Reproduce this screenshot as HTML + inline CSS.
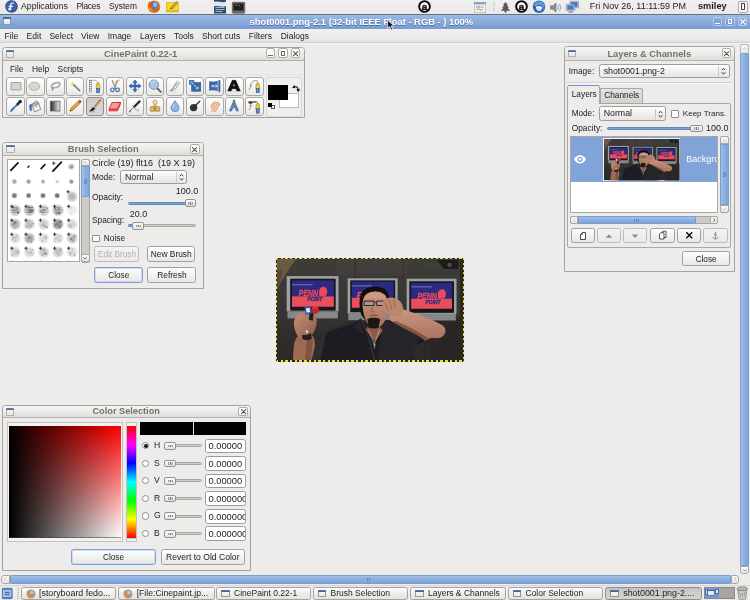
<!DOCTYPE html>
<html>
<head>
<meta charset="utf-8">
<title>CinePaint</title>
<style>
html,body{margin:0;padding:0;}
body{width:750px;height:600px;overflow:hidden;background:#edeceb;font-family:"Liberation Sans",sans-serif;font-size:8.6px;color:#1c1c1c;position:relative;}
.a{position:absolute;box-sizing:border-box;}
.t{position:absolute;white-space:nowrap;line-height:10px;height:10px;}
.b{font-weight:bold;}
svg{position:absolute;overflow:visible;}
/* windows */
.win{position:absolute;background:#edeceb;border:1px solid #a5a3a0;border-radius:3.5px 3.5px 0 0;box-sizing:border-box;}
.wt{position:absolute;left:0;top:0;right:0;height:13px;background:linear-gradient(#f6f5f4,#eceae8 55%,#dedcd9);border-bottom:1px solid #b3b1ae;border-radius:3px 3px 0 0;box-sizing:border-box;}
.wtt{position:absolute;left:0;right:0;top:1px;text-align:center;font-weight:bold;color:#73716e;font-size:9.3px;line-height:10px;}
.wico{position:absolute;left:3px;top:2.4px;width:8.3px;height:7.3px;background:linear-gradient(to bottom,#3a69ad 0,#3a69ad 2px,#f3f2ee 2px,#e6e5e1 100%);box-shadow:inset 0 0 0 .8px rgba(140,143,150,.8);box-sizing:border-box;border-radius:1px;}
.wbtn{position:absolute;top:1.5px;width:9.8px;height:9.7px;border:1px solid #adaba8;border-radius:2px;background:#fbfbfa;box-sizing:border-box;}
.btn{position:absolute;box-sizing:border-box;border:1px solid #a3a19e;border-radius:2.5px;background:linear-gradient(#fefefe,#f3f2f1 50%,#e8e7e5);text-align:center;line-height:13px;font-size:8.4px;white-space:nowrap;}
.btn.dis{color:#b4b2af;border-color:#bebcb9;background:linear-gradient(#f4f3f2,#eae9e7);}
.btn.foc{border-color:#7d9fd2;box-shadow:inset 0 0 0 0.7px #c3d4ec;}
.ent{position:absolute;box-sizing:border-box;border:1px solid #9f9d9a;border-radius:2.5px;background:#fff;}
.combo{position:absolute;box-sizing:border-box;border:1px solid #9f9d9a;border-radius:2.5px;background:linear-gradient(#fefefe,#f1f0ef 50%,#e6e5e3);}
.trough{position:absolute;box-sizing:border-box;height:3px;border:0.5px solid #a8a6a3;border-radius:1.5px;background:#cfcdca;}
.fill{position:absolute;box-sizing:border-box;height:3px;border-radius:1.5px;background:#7ea2d6;border:0.5px solid #6288c0;}
.knob{position:absolute;box-sizing:border-box;height:7.6px;margin-top:-.55px;border:1px solid #94928f;border-radius:2px;background:linear-gradient(#fdfdfd,#e2e1df);}
.knob:after{content:"";position:absolute;left:50%;top:1.6px;margin-left:-.4px;width:.8px;height:2.6px;background:#858380;box-shadow:-1.7px 0 0 #858380,1.7px 0 0 #858380;}
.chk{position:absolute;box-sizing:border-box;width:7.5px;height:7.5px;border:1px solid #8e8c89;background:#fff;border-radius:1px;}
.radio{position:absolute;box-sizing:border-box;width:7.4px;height:7.4px;border:1px solid #8e8c89;background:#fff;border-radius:50%;}
.sbar{position:absolute;box-sizing:border-box;background:#d6d4d1;}
.sbtn{position:absolute;box-sizing:border-box;border:1px solid #a9a7a4;border-radius:2px;background:linear-gradient(#fbfbfa,#e7e6e4);}
.sth{position:absolute;box-sizing:border-box;border:1px solid #7a9cd0;background:linear-gradient(to right,#a5c1e9,#8cb0df 45%,#7fa4d9);border-radius:1px;}
.sthh{position:absolute;box-sizing:border-box;border:1px solid #7a9cd0;background:linear-gradient(#a5c1e9,#8cb0df 45%,#7fa4d9);border-radius:1px;}
.tb{position:absolute;box-sizing:border-box;width:18.400px;height:18.600px;border:1px solid #aaa8a5;border-radius:3px;background:linear-gradient(#ffffff,#f4f3f2 55%,#e9e8e6);}
.tb.on{background:linear-gradient(#cfcdca,#dad8d6);border-color:#8f8d8a;}
.tb svg{left:0.200px;top:0.300px;width:16px;height:16px;}
.task{position:absolute;box-sizing:border-box;top:586.5px;height:13px;border:1px solid #a5a3a0;border-radius:2.5px;background:linear-gradient(#fdfdfc,#eeedec 50%,#e4e3e1);}
.task .t{top:0.8px;font-size:8.5px;}
.tico{position:absolute;left:4.3px;top:2.2px;width:8.6px;height:7.6px;background:linear-gradient(to bottom,#3a69ad 0,#3a69ad 2px,#f6f5f2 2px,#eae9e5 100%);box-shadow:inset 0 0 0 .8px rgba(110,114,124,.9);box-sizing:border-box;border-radius:1px;}
</style>
</head>
<body>
<div id="root" style="position:absolute;left:0;top:0;width:750px;height:600px;will-change:transform;overflow:hidden;">
<!-- ================= TOP PANEL ================= -->
<div class="a" style="left:0;top:0;width:750px;height:14px;background:linear-gradient(#f1f0ef,#eae9e7);"></div>
<div class="a" style="left:0;top:13.7px;width:750px;height:1.1px;background:#66707f;"></div>
<!-- fedora logo -->
<svg style="left:4.5px;top:0.3px;width:13px;height:13px" viewBox="0 0 26 26"><circle cx="13" cy="13" r="12.5" fill="#2f4f8f"/><circle cx="12" cy="12" r="11" fill="#3c63a8"/><path d="M16.5 6.2c-3.2-.9-5.2 1-5.2 3.7v8.3c0 2.3-3.4 2.6-3.6.2-.1-1.700 1.600-2.300 3.000-1.900M8.300 12.800h6.600" fill="none" stroke="#fff" stroke-width="2.3" stroke-linecap="round"/></svg>
<div class="t" style="left:21px;top:1.2px;font-size:8.7px;">Applications</div>
<div class="t" style="left:76.4px;top:1.2px;font-size:8.4px;letter-spacing:-0.22px;">Places</div>
<div class="t" style="left:109px;top:1.2px;font-size:8.4px;">System</div>
<!-- firefox -->
<svg style="left:147px;top:0;width:14px;height:13.5px" viewBox="0 0 28 27"><circle cx="14" cy="13.500" r="12.500" fill="#e8761c"/><circle cx="14.500" cy="11.500" r="8" fill="#3f7fd0"/><circle cx="16" cy="9.500" r="4.500" fill="#8cc4f0"/><path d="M2 12c1.500 9 9 13.500 16 12 5-1.200 8.500-6 8-11.500-1 5-5 8-9.500 7.500-4-.5-6-3.500-6-6.500 0-2 2-3 4.500-2.500-1.500-2-4.500-2.500-6.500-1.500C7 6 6 4 6.500 2.500 3.500 5 1.700 8.500 2 12z" fill="#e25a10"/><path d="M3 14c2 7 8 10 14 9-5 0-9-3-10-7z" fill="#f5b23a"/></svg>
<!-- sticky note -->
<svg style="left:166px;top:1px;width:13px;height:12px" viewBox="0 0 26 24"><rect x="0.500" y="3" width="24" height="19" fill="#f2d62e" stroke="#c9a50e" stroke-width="1"/><rect x="0.500" y="18" width="24" height="4" fill="#e0bd10"/><path d="M9 16l2-4.500L21 .5l3 2.500L14 14.500z" fill="#d89a3a" stroke="#7a5a20" stroke-width=".8"/><path d="M9 16l1.300-3 1.700 1.800z" fill="#333"/></svg>
<!-- writer doc -->
<svg style="left:213px;top:0;width:14px;height:13.5px" viewBox="0 0 28 27"><path d="M2 0h24v27H2z" fill="#2d4a6e"/><path d="M2 4c8-3 16 3 24-1v9c-8 4-16-2-24 1z" fill="#dfe6ee"/><path d="M5 15h18M5 19h18M5 23h14" stroke="#9fb6d0" stroke-width="2"/></svg>
<!-- terminal -->
<svg style="left:232px;top:1.5px;width:13px;height:11.5px" viewBox="0 0 26 23"><rect x=".5" y=".5" width="25" height="22" rx="2" fill="#6b6d6a" stroke="#3c3d3b"/><rect x="3" y="3" width="20" height="14" fill="#1d1f1e"/><path d="M6 6h5M14 6l2 3" stroke="#9a9c99" stroke-width="1.500"/></svg>
<!-- circled a #1 -->
<svg style="left:418px;top:0.200px;width:13px;height:13px" viewBox="0 0 26 26"><circle cx="13" cy="13" r="10.700" fill="#fff" stroke="#0a0a0a" stroke-width="3.900"/><text x="13" y="19.200" font-family="Liberation Sans" font-weight="bold" font-size="19.500" text-anchor="middle" fill="#0a0a0a" stroke="#0a0a0a" stroke-width=".9">a</text></svg>
<!-- calendar-ish -->
<svg style="left:473.500px;top:1.500px;width:12px;height:10.500px" viewBox="0 0 24 21"><rect x=".5" y=".5" width="23" height="20" fill="#f3f2ee" stroke="#9a9894"/><rect x=".5" y=".5" width="23" height="4" fill="#7a9cc9"/><path d="M5 8h6v4H5zM13 8h6M13 11h6M5 15h14M9 13l5 5" stroke="#a9a7a2" stroke-width="1.500" fill="#d8d6d0"/></svg>
<!-- handle -->
<div class="a" style="left:492.500px;top:2px;width:2px;height:10px;background:repeating-linear-gradient(#c9c7c4 0 1px,transparent 1px 2px);"></div>
<!-- tree -->
<svg style="left:500px;top:1.500px;width:11px;height:10.500px" viewBox="0 0 22 21"><path d="M11 0l5 6h-2.500l4.500 5.500h-3l5.500 6H13v3.500H9V17.500H1.500l5.500-6H4l4.500-5.500H6z" fill="#585957"/></svg>
<!-- circled a #2 -->
<svg style="left:515.200px;top:0.200px;width:13px;height:13px" viewBox="0 0 26 26"><circle cx="13" cy="13" r="10.700" fill="#fff" stroke="#0a0a0a" stroke-width="3.900"/><text x="13" y="19.200" font-family="Liberation Sans" font-weight="bold" font-size="19.500" text-anchor="middle" fill="#0a0a0a" stroke="#0a0a0a" stroke-width=".9">a</text></svg>
<!-- thunderbird -->
<svg style="left:532px;top:0;width:14px;height:13.500px" viewBox="0 0 28 27"><circle cx="14" cy="13.500" r="12.500" fill="#2d62b4"/><path d="M5 7c5-6 15-6 19 1 2 4 1 9-2 12 1-5-1-9-5-10-4-1-7 1-8 4-2-2-4-4-4-7z" fill="#5b9be6"/><path d="M8 14c3-3 9-3 12 0 1 3-1 7-5 8-4 0-7-3-7-8z" fill="#f4f5f8"/><path d="M9 17l10 0-5 4z" fill="#c9d3e4"/><path d="M4 9l5 2-3 2z" fill="#e9a520"/></svg>
<!-- speaker -->
<svg style="left:550px;top:1.500px;width:12px;height:11px" viewBox="0 0 24 22"><path d="M1 7.500h5L12 2v18l-6-5.500H1z" fill="#8f908d" stroke="#5e5f5c" stroke-width="1"/><path d="M15 6.500c2 2.500 2 6.500 0 9M18.500 4c3.500 4 3.500 10 0 14" fill="none" stroke="#5f8fd0" stroke-width="1.600"/></svg>
<!-- network -->
<svg style="left:566px;top:1px;width:13px;height:12px" viewBox="0 0 26 24"><rect x="8" y=".5" width="17" height="13" rx="1" fill="#c9d4e4" stroke="#5e6f8a"/><rect x="10" y="2.500" width="13" height="9" fill="#3f6fb4"/><rect x=".5" y="6.500" width="17" height="13" rx="1" fill="#d6dde8" stroke="#5e6f8a"/><rect x="2.500" y="8.500" width="13" height="9" fill="#4a7cc4"/><path d="M5 22.500h9M9 20v2.500" stroke="#6b6d6a" stroke-width="1.500"/></svg>
<div class="t" style="left:589.800px;top:1.200px;font-size:9px;">Fri Nov 26, 11:11:59 PM</div>
<div class="t b" style="left:698px;top:1.200px;font-size:9.200px;">smiley</div>
<!-- right box icon -->
<div class="a" style="left:737.500px;top:1px;width:10.500px;height:11.500px;border:1px solid #a9a7a4;border-radius:2px;background:#f8f8f7;"></div>
<div class="a" style="left:741.300px;top:3.200px;width:3.400px;height:7px;border:1px solid #3a3a3a;border-radius:0.800px;background:#fff;"></div>

<!-- ================= MAIN TITLE BAR ================= -->
<div class="a" style="left:0;top:14.700px;width:750px;height:14.100px;background:linear-gradient(#a0bde6,#98b7e3 8%,#87a9db 50%,#779cd3);"></div>
<div class="a" style="left:3px;top:17.300px;width:8.300px;height:7.300px;background:linear-gradient(to bottom,#3a69ad 0,#3a69ad 2px,#f3f2ee 2px,#e6e5e1 100%);box-shadow:inset 0 0 0 .8px rgba(90,104,134,.85);border-radius:1px;"></div>
<div class="t b" style="left:249.500px;top:16.500px;font-size:9.400px;color:#fff;text-shadow:0 0.600px 0.500px rgba(40,60,110,.55);">shot0001.png-2.1 (32-bit IEEE Float - RGB - ) 100%</div>
<!-- main window buttons -->
<div class="a" style="left:712.800px;top:16.500px;width:9.700px;height:9.700px;border:1px solid #b9cdea;border-radius:2px;background:linear-gradient(#8fb0e0,#6f96d0);"></div>
<div class="a" style="left:715.300px;top:22.600px;width:4.700px;height:1.400px;background:#fff;"></div>
<div class="a" style="left:725.200px;top:16.500px;width:9.700px;height:9.700px;border:1px solid #b9cdea;border-radius:2px;background:linear-gradient(#8fb0e0,#6f96d0);"></div>
<div class="a" style="left:727.900px;top:19.200px;width:4.400px;height:4.400px;border:1px solid #fff;border-top-width:1.600px;"></div>
<div class="a" style="left:737.600px;top:16.500px;width:9.700px;height:9.700px;border:1px solid #b9cdea;border-radius:2px;background:linear-gradient(#8fb0e0,#6f96d0);"></div>
<svg style="left:739.600px;top:18.500px;width:5.700px;height:5.700px" viewBox="0 0 10 10"><path d="M1 1l8 8M9 1l-8 8" stroke="#fff" stroke-width="2.200" stroke-linecap="round"/></svg>

<!-- ================= MAIN MENU BAR ================= -->
<div class="a" style="left:0;top:28.800px;width:750px;height:13.700px;background:linear-gradient(#f0efee,#ecebea 70%,#e2e1df);"></div>
<div class="a" style="left:0;top:42.300px;width:750px;height:.8px;background:#d3d1ce;"></div><div class="a" style="left:0;top:43.100px;width:750px;height:1px;background:#f5f4f3;"></div>
<div class="t" style="left:4.600px;top:30.800px;font-size:8.5px;">File</div>
<div class="t" style="left:26.600px;top:30.800px;font-size:8.5px;">Edit</div>
<div class="t" style="left:49.400px;top:30.800px;font-size:8.5px;">Select</div>
<div class="t" style="left:81px;top:30.800px;font-size:8.5px;">View</div>
<div class="t" style="left:107.700px;top:30.800px;font-size:8.5px;">Image</div>
<div class="t" style="left:140px;top:30.800px;font-size:8.5px;">Layers</div>
<div class="t" style="left:174px;top:30.800px;font-size:8.5px;">Tools</div>
<div class="t" style="left:201.900px;top:30.800px;font-size:8.5px;">Short cuts</div>
<div class="t" style="left:248.800px;top:30.800px;font-size:8.5px;">Filters</div>
<div class="t" style="left:280.700px;top:30.800px;font-size:8.5px;">Dialogs</div>

<!-- ================= MAIN SCROLLBARS ================= -->
<div class="sbar" style="left:739.500px;top:44px;width:10.500px;height:530px;background:#edeceb;"></div>
<div class="sbtn" style="left:740.300px;top:44.200px;width:8.700px;height:9px;border-radius:3px 3px 0 0;border-color:#b9b7b4;border-bottom:none;"></div>
<svg style="left:742.600px;top:47.300px;width:4px;height:2.500px" viewBox="0 0 8 5"><path d="M.5 4.500L4 .8l3.500 3.700" fill="none" stroke="#b3b1ae" stroke-width="1.400"/></svg>
<div class="sth" style="left:740.300px;top:53px;width:8.700px;height:513px;"></div>
<div class="sbtn" style="left:740.300px;top:566px;width:8.700px;height:8px;border-radius:0 0 3px 3px;"></div>
<svg style="left:742.600px;top:568.800px;width:4px;height:2.500px" viewBox="0 0 8 5"><path d="M.5.500L4 4.200 7.500.5" fill="none" stroke="#77756f" stroke-width="1.400"/></svg>
<div class="sbtn" style="left:1.300px;top:575px;width:8.300px;height:8.600px;border-radius:3px 0 0 3px;"></div>
<svg style="left:4.200px;top:577.300px;width:2.500px;height:4px" viewBox="0 0 5 8"><path d="M4.500.5L.8 4l3.700 3.500" fill="none" stroke="#b3b1ae" stroke-width="1.400"/></svg>
<div class="sthh" style="left:9.600px;top:575px;width:721px;height:8.600px;"></div>
<div class="a" style="left:366.500px;top:577.800px;width:4.600px;height:3px;background:repeating-linear-gradient(to right,#5f86c0 0 .8px,transparent .8px 1.900px);"></div>
<div class="sbtn" style="left:730.600px;top:575px;width:8.300px;height:8.600px;border-radius:0 3px 3px 0;"></div>
<svg style="left:733.600px;top:577.300px;width:2.500px;height:4px" viewBox="0 0 5 8"><path d="M.5.500L4.200 4 .5 7.500" fill="none" stroke="#b3b1ae" stroke-width="1.400"/></svg>

<!-- ================= TASKBAR ================= -->
<div class="a" style="left:0;top:584.500px;width:750px;height:15.500px;background:linear-gradient(#e9e8e6,#efeeed 30%,#ebeae8);border-top:1px solid #d9d7d4;"></div>
<!-- show desktop -->
<svg style="left:2px;top:587.500px;width:10.500px;height:11px" viewBox="0 0 21 22"><rect x=".5" y=".5" width="20" height="21" rx="2" fill="#4f80c4" stroke="#2d5596"/><rect x="3" y="5" width="15" height="12" fill="#8fb4e6" stroke="#e8eef8" stroke-width="1"/><path d="M6 9h9M6 13h9" stroke="#2d5596" stroke-width="1.500"/></svg>
<div class="a" style="left:16.500px;top:587.500px;width:2px;height:11px;background:repeating-linear-gradient(#c2c0bd 0 1px,transparent 1px 2px);"></div>
<!-- task buttons -->
<div class="task" style="left:20.500px;width:95.500px;"><svg style="left:4px;top:1px;width:10px;height:10px" viewBox="0 0 28 27"><circle cx="14" cy="13.500" r="12.500" fill="#e8923c"/><circle cx="14.500" cy="11.500" r="8" fill="#6f9fdc"/><circle cx="16" cy="9.500" r="4.500" fill="#b5d4f2"/><path d="M2 12c1.500 9 9 13.500 16 12 5-1.200 8.500-6 8-11.500-1 5-5 8-9.500 7.500-4-.5-6-3.500-6-6.500 0-2 2-3 4.500-2.500-1.500-2-4.500-2.500-6.500-1.500C7 6 6 4 6.500 2.500 3.500 5 1.700 8.500 2 12z" fill="#e58a3c"/></svg><div class="t" style="left:17.500px;font-size:8.850px;">[storyboard fedo...</div></div>
<div class="task" style="left:118px;width:96.500px;"><svg style="left:4px;top:1px;width:10px;height:10px" viewBox="0 0 28 27"><circle cx="14" cy="13.500" r="12.500" fill="#e8923c"/><circle cx="14.500" cy="11.500" r="8" fill="#6f9fdc"/><circle cx="16" cy="9.500" r="4.500" fill="#b5d4f2"/><path d="M2 12c1.500 9 9 13.500 16 12 5-1.200 8.500-6 8-11.500-1 5-5 8-9.500 7.500-4-.5-6-3.500-6-6.500 0-2 2-3 4.500-2.500-1.500-2-4.500-2.500-6.500-1.500C7 6 6 4 6.500 2.500 3.500 5 1.700 8.500 2 12z" fill="#e58a3c"/></svg><div class="t" style="left:17.700px;font-size:8.650px;">[File:Cinepaint.jp...</div></div>
<div class="task" style="left:216px;width:94.500px;"><div class="tico"></div><div class="t" style="left:17px;">CinePaint 0.22-1</div></div>
<div class="task" style="left:312.500px;width:95.500px;"><div class="tico"></div><div class="t" style="left:17px;">Brush Selection</div></div>
<div class="task" style="left:410px;width:95.500px;"><div class="tico"></div><div class="t" style="left:17px;">Layers &amp; Channels</div></div>
<div class="task" style="left:507.500px;width:95.500px;"><div class="tico"></div><div class="t" style="left:17px;">Color Selection</div></div>
<div class="task" style="left:605px;width:96.500px;background:linear-gradient(#c4c2bf,#cfcdca 40%,#d4d2cf);border-color:#8f8d8a;"><div class="tico"></div><div class="t" style="left:17.200px;font-size:8.900px;">shot0001.png-2....</div></div>
<!-- workspace switcher -->
<div class="a" style="left:703.500px;top:586.800px;width:31px;height:11.800px;background:#a8a4a1;border:1px solid #8a8885;"></div>
<div class="a" style="left:704.500px;top:587.800px;width:14.500px;height:9.800px;background:#6f9ad6;"></div>
<div class="a" style="left:706.500px;top:589.500px;width:8.500px;height:6.500px;background:#e9e8e4;border:1px solid #5f7fae;border-top:1.500px solid #2f5a9e;"></div>
<div class="a" style="left:704.800px;top:589px;width:3px;height:6px;background:#c9d9f0;border:0.500px solid #4a6fae;"></div>
<div class="a" style="left:715px;top:588.500px;width:3.500px;height:5px;background:#dfe6f2;border:0.500px solid #4a6fae;"></div>
<!-- trash -->
<svg style="left:736px;top:586px;width:12.500px;height:14px" viewBox="0 0 25 28"><path d="M3 6l2.500 20c3 2 11 2 14 0L22 6z" fill="#d4d5d1" stroke="#6a6b68" stroke-width="1.200"/><ellipse cx="12.500" cy="5.500" rx="10.500" ry="3.800" fill="#b9bab6" stroke="#5a5b58" stroke-width="1.200"/><path d="M7 10l2 14M12.500 10v15M18 10l-2 14M5 14l15 6M20 13L6 21" stroke="#8a8b88" stroke-width="1" fill="none"/></svg>
<!-- ================= TOOLBOX WINDOW ================= -->
<div class="win" style="left:2px;top:46.500px;width:302.700px;height:71.700px;">
<div class="a" style="left:1px;top:.5px;width:299.700px;height:69.200px;"><div class="wt" style="left:-1px;top:-.5px;right:0;height:13.500px"><div class="wico" style="top:2.900px"></div><div class="wtt" style="left:-25.400px;top:1.500px;font-size:9.500px">CinePaint 0.22-1</div>
<div class="wbtn" style="left:262.700px;top:.9px;"></div><div class="a" style="left:265.200px;top:7.300px;width:5px;height:1.300px;background:#6a6a68;"></div>
<div class="wbtn" style="left:275px;top:.9px;"></div><div class="a" style="left:277.600px;top:3.300px;width:4.800px;height:4.800px;border:1px solid #6a6a68;border-top-width:1.500px;"></div>
<div class="wbtn" style="left:287.700px;top:.9px;"></div><svg style="left:290px;top:3.200px;width:5.200px;height:5.200px" viewBox="0 0 10 10"><path d="M1 1l8 8M9 1l-8 8" stroke="#555553" stroke-width="2.100" stroke-linecap="round"/></svg>
</div>
<div class="t" style="left:6px;top:16.200px;font-size:8.400px;">File</div><div class="t" style="left:28px;top:16.200px;font-size:8.400px;">Help</div><div class="t" style="left:53.600px;top:16.200px;font-size:8.400px;">Scripts</div>
<div class="a" style="left:0;top:26.300px;width:299.700px;height:1px;background:#e6e5e3;"></div>
<div class="tb" style="left:2.4px;top:29.2px;"><svg viewBox="0 0 16 16"><rect x="3" y="4.500" width="10" height="7.500" rx=".6" fill="#d3d5d1" stroke="#969894" stroke-width=".9"/></svg></div>
<div class="tb" style="left:22.3px;top:29.2px;"><svg viewBox="0 0 16 16"><ellipse cx="7.300" cy="8.300" rx="5.400" ry="4" fill="#d5d7d3" stroke="#969894" stroke-width=".9" stroke-dasharray="1.400 .5"/></svg></div>
<div class="tb" style="left:42.2px;top:29.2px;"><svg viewBox="0 0 16 16"><path d="M5.200 9.600c-2-1.700.4-4.300 4-4.900 3-.5 4.800 1 3.300 2.700-1.300 1.500-4.300 2.700-6.700 2.300l-.5 2.300" fill="none" stroke="#8c8e8a" stroke-width="1.500" stroke-linecap="round"/><path d="M5.200 9.600c-2-1.700.4-4.300 4-4.900 3-.5 4.800 1 3.300 2.700-1.300 1.500-4.300 2.700-6.700 2.300" fill="none" stroke="#d8dad6" stroke-width=".5"/></svg></div>
<div class="tb" style="left:62.1px;top:29.2px;"><svg viewBox="0 0 16 16"><path d="M6.300 6.300l6.200 6.200" stroke="#6f7262" stroke-width="1.700" stroke-linecap="round"/><path d="M6.300 6.300l5.800 5.800" stroke="#a6a996" stroke-width=".6"/><path d="M5.600 3.600l.6 1.400 1.400.6-1.400.6-.6 1.400-.6-1.400-1.400-.6 1.400-.6z" fill="#f3ea7a" stroke="#e0d050" stroke-width=".3"/></svg></div>
<div class="tb" style="left:82.0px;top:29.2px;"><svg viewBox="0 0 16 16"><rect x="2.300" y="2" width="2" height="12.300" fill="#fff" stroke="#777" stroke-width=".4"/><path d="M2.700 2.200v12" stroke="#333" stroke-width=".8" stroke-dasharray=".9 1.100"/><path d="M3.900 2.200v12" stroke="#333" stroke-width=".8" stroke-dasharray=".9 1.100"/><path d="M3.500 3c3-1.500 6-1.200 7.500 1.800" fill="none" stroke="#8a8c88" stroke-width=".8"/><g transform="translate(8.3,3.0) scale(.92,1.2)"><path d="M1.200 3.200c0-2.200 3.600-2.200 3.600 0l.5 3H.7z" fill="#f2d23a" stroke="#9a7c10" stroke-width=".5"/><circle cx="3" cy="2.600" r=".9" fill="#fff7c0" stroke="#8a6f10" stroke-width=".4"/><rect x="1.200" y="6.200" width="3.600" height="3.600" fill="#3a6cb8" stroke="#244a86" stroke-width=".4"/><path d="M3 6.200v3.600" stroke="#9cc0ee" stroke-width=".6"/></g></svg></div>
<div class="tb" style="left:101.9px;top:29.2px;"><svg viewBox="0 0 16 16"><path d="M5.300 2.500l3.300 8M10.700 2.500l-3.300 8" stroke="#9a9c98" stroke-width="1.500" stroke-linecap="round"/><circle cx="5.400" cy="11.800" r="1.800" fill="none" stroke="#3a66a8" stroke-width="1.200"/><circle cx="10.600" cy="11.800" r="1.800" fill="none" stroke="#3a66a8" stroke-width="1.200"/><path d="M8.300 5.500c0-2.800 1.500-3.500 5.200-3.300" fill="none" stroke="#e8a030" stroke-width=".8"/></svg></div>
<div class="tb" style="left:121.8px;top:29.2px;"><svg viewBox="0 0 16 16"><path d="M8 1.800l2.300 2.700H8.900v2.600h2.600V5.700L14.200 8l-2.700 2.300V8.900H8.900v2.600h1.400L8 14.200l-2.300-2.700h1.400V8.900H4.500v1.400L1.800 8l2.700-2.300v1.400h2.600V4.500H5.700z" fill="#3b6cb6" stroke="#2a5596" stroke-width=".4"/></svg></div>
<div class="tb" style="left:141.7px;top:29.2px;"><svg viewBox="0 0 16 16"><path d="M9.800 9.800l4 4" stroke="#5c5e5a" stroke-width="1.900" stroke-linecap="round"/><circle cx="6.800" cy="6.700" r="4.700" fill="#a9c6ea" stroke="#7d8ea6" stroke-width="1"/><path d="M3.600 5.500c.8-2 3-3 5-2.300" fill="none" stroke="#dcebfa" stroke-width=".9"/></svg></div>
<div class="tb" style="left:161.6px;top:29.2px;"><svg viewBox="0 0 16 16"><path d="M3 13l8.500-8.500M3 13l6-2.500L13 4M5.500 11l5-8.500M3 13l3-1" fill="none" stroke="#8a8c88" stroke-width=".8"/><path d="M2.500 13.400h6" stroke="#c9cbc7" stroke-width=".6"/></svg></div>
<div class="tb" style="left:181.5px;top:29.2px;"><svg viewBox="0 0 16 16"><rect x="4.700" y="4.600" width="9" height="8.600" fill="#3a69ad" stroke="#2c5596" stroke-width=".7"/><rect x="2.300" y="2.600" width="4.600" height="3.600" fill="#5e8fd4" stroke="#2c5596" stroke-width=".7"/><path d="M4.600 4.400l6.300 6.300M10.900 10.700V8.600M10.900 10.700H8.800" stroke="#dfeaf8" stroke-width=".8" fill="none"/></svg></div>
<div class="tb" style="left:201.4px;top:29.2px;"><svg viewBox="0 0 16 16"><path d="M2.600 3.600c3.500.9 7 .4 10.400-1.400v11.600c-3.400-1.800-6.900-2.300-10.400-1.400z" fill="#3a69ad" stroke="#2c5596" stroke-width=".6"/><path d="M11 2.900v10.200" stroke="#7fa6de" stroke-width="1.600"/><path d="M4.800 8h5.400M4.800 8l1.400-1.400M4.800 8l1.400 1.400M10.200 8L8.800 6.600M10.200 8L8.800 9.400" stroke="#e9f0fa" stroke-width=".9" fill="none"/></svg></div>
<div class="tb" style="left:221.3px;top:29.2px;"><svg viewBox="0 0 16 16"><path d="M1.700 13L6.300 2.300h3.400L14.300 13h-3.400l-.8-2.200H5.900L5.100 13zM6.800 8.300h2.400L8 4.900z" fill="#111" stroke="#000" stroke-width=".5"/><path d="M1.500 13.600h13" stroke="#bbb" stroke-width=".5"/></svg></div>
<div class="tb" style="left:241.2px;top:29.2px;"><svg viewBox="0 0 16 16"><path d="M3 12l2.600-4.500-1.800.2L7 3.300c2-1.300 4-.9 5 .2" fill="none" stroke="#8a8c88" stroke-width=".9"/><g transform="translate(9.0,3.0) scale(.92,1.2)"><path d="M1.200 3.200c0-2.200 3.600-2.200 3.600 0l.5 3H.7z" fill="#f2d23a" stroke="#9a7c10" stroke-width=".5"/><circle cx="3" cy="2.600" r=".9" fill="#fff7c0" stroke="#8a6f10" stroke-width=".4"/><rect x="1.200" y="6.200" width="3.600" height="3.600" fill="#3a6cb8" stroke="#244a86" stroke-width=".4"/><path d="M3 6.200v3.600" stroke="#9cc0ee" stroke-width=".6"/></g></svg></div>
<div class="tb" style="left:2.4px;top:49.2px;"><svg viewBox="0 0 16 16"><path d="M4.300 11.500l6-6.200" stroke="#3c6bb4" stroke-width="1.900" stroke-linecap="round"/><path d="M3 13.400c0-1.200.8-2 2-2.200" stroke="#3c6bb4" stroke-width="1.600" fill="none" stroke-linecap="round"/><path d="M9.300 6.600l2.800-2.900" stroke="#1e2f4c" stroke-width="2.600" stroke-linecap="round"/><circle cx="12.300" cy="3.400" r="1.700" fill="#1b2a44"/><path d="M5 10.600l4.300-4.400" stroke="#a9c9f0" stroke-width=".6"/></svg></div>
<div class="tb" style="left:22.3px;top:49.2px;"><svg viewBox="0 0 16 16"><path d="M5 6.500l6.500-1.500 2.200 6.300-6.300 2.600z" fill="#f4f4f2" stroke="#6e706c" stroke-width=".8"/><ellipse cx="8.300" cy="5.900" rx="3.300" ry="1.200" transform="rotate(-13 8.300 5.900)" fill="#c9cbc7" stroke="#6e706c" stroke-width=".6"/><path d="M7.300 6.300c-.3-2.700 1-3.900 2.200-3.600 1.200.3 1.600 1.800 1.200 3.700" fill="none" stroke="#7a7c78" stroke-width=".8"/><circle cx="9" cy="8.300" r=".9" fill="none" stroke="#6e706c" stroke-width=".5"/><path d="M4.900 6.300c-1.800-.3-2.700.6-2.400 2.500l.6 3.500c.2.900 1.300.9 1.400 0l.1-3.800z" fill="#3f72bc" stroke="#2c5596" stroke-width=".4"/></svg></div>
<div class="tb" style="left:42.2px;top:49.2px;"><svg viewBox="0 0 16 16"><defs><linearGradient id="gr1" x1="0" x2="1" y1="0" y2="0"><stop offset="0" stop-color="#222"/><stop offset="1" stop-color="#f2f2f2"/></linearGradient></defs><rect x="3.300" y="3.200" width="9.600" height="9.800" fill="url(#gr1)" stroke="#6e706c" stroke-width=".9"/><path d="M3 13.700h10.200" stroke="#aaa" stroke-width=".6"/></svg></div>
<div class="tb" style="left:62.1px;top:49.2px;"><svg viewBox="0 0 16 16"><path d="M3 13.200l1-3L11.400 3l2 2L6 12.300z" fill="#e9a13a" stroke="#8a5a14" stroke-width=".6"/><path d="M5 9.800l1.600 1.700M10.400 4l2 2" stroke="#b87418" stroke-width=".5"/><path d="M11.400 3l.9-.8c.8-.5 2.300.9 1.900 1.800l-.8 1z" fill="#e04848" stroke="#9a2020" stroke-width=".4"/><path d="M3 13.200l.5-1.500 1 1z" fill="#222"/></svg></div>
<div class="tb on" style="left:82.0px;top:49.2px;"><svg viewBox="0 0 16 16"><path d="M8 8.500l5.200-6.300" stroke="#b8702c" stroke-width="1.900" stroke-linecap="round"/><path d="M8.200 8.200l4.600-5.500" stroke="#e0a460" stroke-width=".5"/><path d="M6.300 9.300l1.800 1.500 1-1.300-1.800-1.500z" fill="#c9cbc7" stroke="#666" stroke-width=".4"/><path d="M6.300 9.300c-1.800.5-2.300 2.700-4 3.800 2 .6 4.600-.2 5.800-2.300z" fill="#1a1a1a"/><path d="M2 13.800h6" stroke="#777" stroke-width=".6"/></svg></div>
<div class="tb" style="left:101.9px;top:49.2px;"><svg viewBox="0 0 16 16"><path d="M5 4.500h8.500l-3 6.700H2z" fill="#f29a9a" stroke="#e03030" stroke-width="1"/><path d="M2 11.200h8.500l3-6.700v1.800l-3 6.700H2z" fill="#ef5050" stroke="#d02020" stroke-width=".5"/></svg></div>
<div class="tb" style="left:121.8px;top:49.2px;"><svg viewBox="0 0 16 16"><path d="M7 9l5.600-5.600" stroke="#2c2e2c" stroke-width="2.200" stroke-linecap="round"/><path d="M5.200 7.500l3.300 3.300" stroke="#6e706c" stroke-width=".9"/><path d="M6.800 9.200l-3 3" stroke="#8a8c88" stroke-width="1"/><path d="M3.800 12.200l-1.300 1.600" stroke="#3f72bc" stroke-width="1.300" stroke-linecap="round"/><path d="M8 11.800h3.500l-1.200 1.800" stroke="#8a8c88" stroke-width=".7" fill="none"/></svg></div>
<div class="tb" style="left:141.7px;top:49.2px;"><svg viewBox="0 0 16 16"><circle cx="8" cy="4.300" r="2.100" fill="#f3e3b8" stroke="#b08a3a" stroke-width=".7"/><path d="M7 6.300h2l.4 2.500H6.600z" fill="#e4c680" stroke="#b08a3a" stroke-width=".5"/><rect x="3.300" y="8.800" width="9.400" height="4" rx=".6" fill="#e2c070" stroke="#9a7424" stroke-width=".7"/><path d="M6.500 10.800h3M8 9.800v2" stroke="#6a5010" stroke-width=".7"/><path d="M3 13.500h10" stroke="#b9a060" stroke-width=".6"/></svg></div>
<div class="tb" style="left:161.6px;top:49.2px;"><svg viewBox="0 0 16 16"><path d="M8 2.600c1.500 2.700 4 4.900 4 7.400a4 3.700 0 0 1-8 0c0-2.500 2.500-4.700 4-7.400z" fill="#8fb4e4" stroke="#5c86c0" stroke-width=".8"/><path d="M6 9.600c0-1.300.8-2.600 1.600-3.600" fill="none" stroke="#dbe9f8" stroke-width=".9"/></svg></div>
<div class="tb" style="left:181.5px;top:49.2px;"><svg viewBox="0 0 16 16"><path d="M8.500 7.500l4.300-4.200" stroke="#3c3e3c" stroke-width="1.500" stroke-linecap="round"/><circle cx="6.600" cy="9.600" r="3.700" fill="#2e302e"/><path d="M4.300 8.500c.4-1 1.300-1.700 2.300-1.800" stroke="#6a6c6a" stroke-width=".7" fill="none"/></svg></div>
<div class="tb" style="left:201.4px;top:49.2px;"><svg viewBox="0 0 16 16"><path d="M4.300 8.300c0-2.800 2.500-4.400 5-4.300 2.300.1 3.700 1.600 3.300 3.200-.3 1.200-1.700 1.300-2.200 2.500-.5 1.300-.3 3-2.300 3.200-2.600.2-3.800-2-3.800-4.600z" fill="#f3c9a8" stroke="#c98a5a" stroke-width=".7"/><path d="M6.500 6.300c1 .8 1.300 2.300.8 3.800M9 5.500c.6.700.8 1.500.6 2.400" stroke="#c98a5a" stroke-width=".6" fill="none"/><path d="M3 12.800c1.500 1 4 1 6 .2" stroke="#d8a070" stroke-width=".6" fill="none"/></svg></div>
<div class="tb" style="left:221.3px;top:49.2px;"><svg viewBox="0 0 16 16"><path d="M8 2l-3.800 9 1.300 2.200L8 7.500l2.500 5.700 1.300-2.200z" fill="#5e8cd0" stroke="#2c5596" stroke-width=".6"/><path d="M8 3.500v7M6.800 6h2.400M6.800 8h2.400" stroke="#777" stroke-width=".8"/><circle cx="8" cy="2.800" r="1.100" fill="#9a9c98" stroke="#555" stroke-width=".4"/><path d="M4.200 11l-.3 2.600M11.800 11l.3 2.600" stroke="#2c5596" stroke-width=".9"/></svg></div>
<div class="tb" style="left:241.2px;top:49.2px;"><svg viewBox="0 0 16 16"><path d="M3 12l2.600-4.500-1.800.2L6 4.300c2-1 5-1 6 .2" fill="none" stroke="#8a8c88" stroke-width=".9"/><path d="M2.500 3.800l2.500-.6 1.600 1.300-1.300 1.100-2.400-.3z" fill="#4a3c1c" stroke="#2a200c" stroke-width=".4"/><path d="M6 4.300c1.500-.5 3-.6 4.400-.2" stroke="#4a3c1c" stroke-width="1" fill="none"/><g transform="translate(9.0,3.4) scale(.92,1.2)"><path d="M1.200 3.200c0-2.200 3.600-2.200 3.600 0l.5 3H.7z" fill="#f2d23a" stroke="#9a7c10" stroke-width=".5"/><circle cx="3" cy="2.600" r=".9" fill="#fff7c0" stroke="#8a6f10" stroke-width=".4"/><rect x="1.200" y="6.200" width="3.600" height="3.600" fill="#3a6cb8" stroke="#244a86" stroke-width=".4"/><path d="M3 6.200v3.600" stroke="#9cc0ee" stroke-width=".6"/></g></svg></div>
<div class="a" style="left:261.700px;top:29px;width:36px;height:39.500px;border:1px solid #d9d7d4;border-radius:2px;background:#f0efee;"></div>
<div class="a" style="left:275px;top:45.200px;width:20.400px;height:15.300px;background:#fff;border:0.600px solid #bdbbb8;"></div>
<div class="a" style="left:264px;top:36.700px;width:19.800px;height:15px;background:#000;"></div>
<div class="a" style="left:266.500px;top:57px;width:4px;height:4px;background:#fff;border:0.500px solid #555;"></div>
<div class="a" style="left:264px;top:54.500px;width:4px;height:4px;background:#000;"></div>
<svg style="left:287.500px;top:36.600px;width:8px;height:7.500px" viewBox="0 0 16 15"><path d="M3.500 4.500c4.500-2.500 8.500 0 9 5" fill="none" stroke="#111" stroke-width="2.400"/><path d="M0 5.500L5 0l1.500 6.500zM16 7.500l-3 7L8.500 9z" fill="#111"/></svg>
</div></div>
<!-- ================= BRUSH SELECTION ================= -->
<div class="win" style="left:2.300px;top:141.500px;width:201.400px;height:147.500px;">
<div class="wt" style="height:13.500px"><div class="wico" style="top:2.900px"></div><div class="wtt" style="left:.4px;top:1.500px">Brush Selection</div>
<div class="wbtn" style="left:186.7px;top:1.800px;"></div><svg style="left:189.1px;top:4.200px;width:5.200px;height:5.200px" viewBox="0 0 10 10"><path d="M1 1l8 8M9 1l-8 8" stroke="#555553" stroke-width="2.100" stroke-linecap="round"/></svg>
</div>
<div class="a" style="left:4.0px;top:16.0px;width:72.7px;height:103.7px;background:#fff;border:1px solid #a9a7a4;overflow:hidden;">
<svg style="left:-1px;top:-1px;width:72.7px;height:103.7px" viewBox="7.3 158.5 72.7 103.7">
<defs><radialGradient id="bg1"><stop offset="0" stop-color="#4a4a4a" stop-opacity=".92"/><stop offset=".55" stop-color="#666" stop-opacity=".78"/><stop offset=".85" stop-color="#888" stop-opacity=".38"/><stop offset="1" stop-color="#999" stop-opacity="0"/></radialGradient><pattern id="stripes" width="4" height="1.700" patternUnits="userSpaceOnUse"><rect width="4" height=".7" fill="#fff" opacity=".55"/></pattern><filter id="bl"><feGaussianBlur stdDeviation=".45"/></filter></defs>
<path d="M11.1 169.8l7.200-7.400" stroke="#111" stroke-width="1.700" stroke-linecap="round"/>
<path d="M28.2 166.8l1.300-1.400" stroke="#111" stroke-width="1.300" stroke-linecap="round"/>
<path d="M41.4 168.1l3.800-4" stroke="#111" stroke-width="1.600" stroke-linecap="round"/>
<path d="M53.2 170.6l8.500-9" stroke="#111" stroke-width="1.700" stroke-linecap="round"/>
<path d="M52.3 162.7h3.400M54.0 161.0v3.400" stroke="#222" stroke-width=".85"/>
<g filter="url(#bl)">
<circle cx="71.6" cy="166.2" r="3.6" fill="url(#bg1)" opacity="0.55"/><path d="M69.6 167.4l3-2.500 1 2.500z" fill="#888" opacity=".6"/>
<circle cx="14.7" cy="181.1" r="3.0" fill="url(#bg1)" opacity="0.60"/>
<circle cx="28.9" cy="181.1" r="2.8" fill="url(#bg1)" opacity="0.68"/>
<circle cx="43.3" cy="181.1" r="2.6" fill="url(#bg1)" opacity="0.58"/>
<circle cx="57.5" cy="181.1" r="2.3" fill="url(#bg1)" opacity="0.33"/>
<circle cx="71.6" cy="181.1" r="2.8" fill="url(#bg1)" opacity="0.72"/>
<circle cx="14.7" cy="195.1" r="3.3" fill="url(#bg1)" opacity="0.95"/>
<circle cx="28.9" cy="195.1" r="3.1" fill="url(#bg1)" opacity="0.95"/>
<circle cx="43.3" cy="195.1" r="3.2" fill="url(#bg1)" opacity="0.95"/>
<circle cx="57.5" cy="195.1" r="3.2" fill="url(#bg1)" opacity="0.98"/>
<circle cx="72.4" cy="196.1" r="6.0" fill="url(#bg1)" opacity="0.50"/>
<circle cx="15.5" cy="209.8" r="6.3" fill="url(#bg1)" opacity="0.77"/>
<circle cx="15.5" cy="209.8" r="5" fill="url(#stripes)"/>
<circle cx="13.7" cy="207.0" r="0.8" fill="#444" opacity="0.50"/>
<circle cx="13.1" cy="206.8" r="0.8" fill="#444" opacity="0.50"/>
<circle cx="18.4" cy="211.9" r="1.0" fill="#444" opacity="0.50"/>
<circle cx="13.6" cy="210.1" r="0.7" fill="#444" opacity="0.50"/>
<circle cx="13.2" cy="207.0" r="0.7" fill="#444" opacity="0.50"/>
<circle cx="18.5" cy="212.1" r="1.1" fill="#444" opacity="0.50"/>
<circle cx="17.6" cy="207.7" r="0.7" fill="#444" opacity="0.50"/>
<circle cx="29.7" cy="209.8" r="6.3" fill="url(#bg1)" opacity="0.85"/>
<circle cx="29.7" cy="209.8" r="5" fill="url(#stripes)"/>
<circle cx="30.6" cy="211.4" r="1.1" fill="#444" opacity="0.55"/>
<circle cx="32.4" cy="206.9" r="0.9" fill="#444" opacity="0.55"/>
<circle cx="30.9" cy="209.8" r="0.6" fill="#444" opacity="0.55"/>
<circle cx="29.5" cy="206.9" r="1.2" fill="#444" opacity="0.55"/>
<circle cx="32.3" cy="210.1" r="0.7" fill="#444" opacity="0.55"/>
<circle cx="32.6" cy="210.3" r="1.1" fill="#444" opacity="0.55"/>
<circle cx="32.1" cy="209.9" r="0.8" fill="#444" opacity="0.55"/>
<circle cx="44.1" cy="209.8" r="6.3" fill="url(#bg1)" opacity="0.68"/>
<circle cx="44.1" cy="209.8" r="5" fill="url(#stripes)"/>
<circle cx="44.8" cy="209.3" r="0.6" fill="#444" opacity="0.44"/>
<circle cx="42.7" cy="212.0" r="0.5" fill="#444" opacity="0.44"/>
<circle cx="40.9" cy="210.7" r="0.7" fill="#444" opacity="0.44"/>
<circle cx="44.3" cy="209.6" r="0.7" fill="#444" opacity="0.44"/>
<circle cx="47.6" cy="207.7" r="0.8" fill="#444" opacity="0.44"/>
<circle cx="42.0" cy="210.7" r="0.7" fill="#444" opacity="0.44"/>
<circle cx="43.1" cy="211.5" r="0.7" fill="#444" opacity="0.44"/>
<circle cx="58.3" cy="209.8" r="6.3" fill="url(#bg1)" opacity="0.77"/>
<circle cx="58.3" cy="209.8" r="5" fill="url(#stripes)"/>
<circle cx="58.7" cy="212.6" r="0.6" fill="#444" opacity="0.50"/>
<circle cx="55.2" cy="207.9" r="1.0" fill="#444" opacity="0.50"/>
<circle cx="59.1" cy="208.0" r="0.7" fill="#444" opacity="0.50"/>
<circle cx="56.0" cy="209.5" r="0.5" fill="#444" opacity="0.50"/>
<circle cx="59.7" cy="212.6" r="1.2" fill="#444" opacity="0.50"/>
<circle cx="59.9" cy="213.0" r="0.5" fill="#444" opacity="0.50"/>
<circle cx="56.8" cy="213.1" r="1.0" fill="#444" opacity="0.50"/>
<circle cx="72.4" cy="209.8" r="6.3" fill="url(#bg1)" opacity="0.17"/>
<circle cx="72.4" cy="209.8" r="5" fill="url(#stripes)"/>
<circle cx="71.8" cy="212.9" r="0.9" fill="#444" opacity="0.11"/>
<circle cx="74.6" cy="208.4" r="0.6" fill="#444" opacity="0.11"/>
<circle cx="72.0" cy="207.3" r="0.8" fill="#444" opacity="0.11"/>
<circle cx="75.6" cy="208.6" r="0.5" fill="#444" opacity="0.11"/>
<circle cx="69.2" cy="207.5" r="1.0" fill="#444" opacity="0.11"/>
<circle cx="71.4" cy="208.3" r="0.6" fill="#444" opacity="0.11"/>
<circle cx="75.8" cy="209.3" r="0.6" fill="#444" opacity="0.11"/>
<circle cx="15.5" cy="223.7" r="6.3" fill="url(#bg1)" opacity="0.55"/>
<circle cx="12.4" cy="220.6" r="0.6" fill="#444" opacity="0.36"/>
<circle cx="16.7" cy="221.2" r="0.5" fill="#444" opacity="0.36"/>
<circle cx="15.4" cy="221.9" r="1.2" fill="#444" opacity="0.36"/>
<circle cx="12.9" cy="223.9" r="1.0" fill="#444" opacity="0.36"/>
<circle cx="14.9" cy="227.1" r="0.8" fill="#444" opacity="0.36"/>
<circle cx="13.7" cy="223.1" r="0.5" fill="#444" opacity="0.36"/>
<circle cx="14.9" cy="221.9" r="1.1" fill="#444" opacity="0.36"/>
<circle cx="29.7" cy="223.7" r="6.3" fill="url(#bg1)" opacity="0.42"/>
<circle cx="32.0" cy="223.7" r="0.5" fill="#444" opacity="0.28"/>
<circle cx="28.0" cy="221.9" r="0.6" fill="#444" opacity="0.28"/>
<circle cx="27.8" cy="226.3" r="0.6" fill="#444" opacity="0.28"/>
<circle cx="26.6" cy="226.7" r="0.9" fill="#444" opacity="0.28"/>
<circle cx="33.1" cy="223.0" r="1.1" fill="#444" opacity="0.28"/>
<circle cx="30.8" cy="225.7" r="1.0" fill="#444" opacity="0.28"/>
<circle cx="29.7" cy="220.9" r="0.6" fill="#444" opacity="0.28"/>
<circle cx="44.1" cy="223.7" r="6.3" fill="url(#bg1)" opacity="0.36"/>
<circle cx="46.7" cy="226.5" r="1.1" fill="#444" opacity="0.23"/>
<circle cx="43.0" cy="224.8" r="1.1" fill="#444" opacity="0.23"/>
<circle cx="45.1" cy="225.9" r="0.9" fill="#444" opacity="0.23"/>
<circle cx="45.2" cy="225.0" r="0.7" fill="#444" opacity="0.23"/>
<circle cx="47.1" cy="226.9" r="0.6" fill="#444" opacity="0.23"/>
<circle cx="47.4" cy="226.9" r="1.0" fill="#444" opacity="0.23"/>
<circle cx="40.9" cy="226.5" r="0.6" fill="#444" opacity="0.23"/>
<circle cx="58.3" cy="223.7" r="6.3" fill="url(#bg1)" opacity="0.77"/>
<circle cx="61.6" cy="224.9" r="0.5" fill="#444" opacity="0.50"/>
<circle cx="56.0" cy="224.6" r="0.9" fill="#444" opacity="0.50"/>
<circle cx="60.0" cy="226.7" r="0.7" fill="#444" opacity="0.50"/>
<circle cx="54.8" cy="226.7" r="0.5" fill="#444" opacity="0.50"/>
<circle cx="60.9" cy="221.0" r="1.1" fill="#444" opacity="0.50"/>
<circle cx="60.3" cy="226.3" r="0.9" fill="#444" opacity="0.50"/>
<circle cx="61.0" cy="221.6" r="1.0" fill="#444" opacity="0.50"/>
<circle cx="72.4" cy="223.7" r="6.3" fill="url(#bg1)" opacity="0.27"/>
<circle cx="71.2" cy="226.4" r="1.0" fill="#444" opacity="0.18"/>
<circle cx="72.2" cy="223.9" r="0.5" fill="#444" opacity="0.18"/>
<circle cx="69.1" cy="224.4" r="0.8" fill="#444" opacity="0.18"/>
<circle cx="75.0" cy="224.5" r="0.6" fill="#444" opacity="0.18"/>
<circle cx="71.4" cy="225.6" r="0.9" fill="#444" opacity="0.18"/>
<circle cx="69.0" cy="226.1" r="1.1" fill="#444" opacity="0.18"/>
<circle cx="69.5" cy="224.0" r="0.8" fill="#444" opacity="0.18"/>
<circle cx="15.5" cy="237.8" r="6.3" fill="url(#bg1)" opacity="0.27"/>
<circle cx="17.5" cy="236.5" r="0.7" fill="#444" opacity="0.18"/>
<circle cx="15.4" cy="241.1" r="0.6" fill="#444" opacity="0.18"/>
<circle cx="12.8" cy="238.6" r="1.1" fill="#444" opacity="0.18"/>
<circle cx="15.6" cy="237.3" r="1.1" fill="#444" opacity="0.18"/>
<circle cx="17.4" cy="234.8" r="1.1" fill="#444" opacity="0.18"/>
<circle cx="13.4" cy="236.4" r="1.1" fill="#444" opacity="0.18"/>
<circle cx="15.0" cy="239.9" r="0.6" fill="#444" opacity="0.18"/>
<circle cx="29.7" cy="237.8" r="6.3" fill="url(#bg1)" opacity="0.59"/>
<circle cx="32.3" cy="235.5" r="0.6" fill="#444" opacity="0.39"/>
<circle cx="29.7" cy="236.7" r="0.9" fill="#444" opacity="0.39"/>
<circle cx="32.5" cy="239.3" r="0.5" fill="#444" opacity="0.39"/>
<circle cx="28.4" cy="238.1" r="0.8" fill="#444" opacity="0.39"/>
<circle cx="31.2" cy="237.7" r="0.6" fill="#444" opacity="0.39"/>
<circle cx="27.9" cy="240.2" r="0.7" fill="#444" opacity="0.39"/>
<circle cx="31.6" cy="241.2" r="0.9" fill="#444" opacity="0.39"/>
<circle cx="44.1" cy="237.8" r="6.3" fill="url(#bg1)" opacity="0.24"/>
<circle cx="45.3" cy="238.6" r="0.7" fill="#444" opacity="0.15"/>
<circle cx="47.0" cy="237.6" r="1.1" fill="#444" opacity="0.15"/>
<circle cx="42.7" cy="240.4" r="1.1" fill="#444" opacity="0.15"/>
<circle cx="44.9" cy="237.4" r="0.6" fill="#444" opacity="0.15"/>
<circle cx="46.0" cy="236.8" r="1.0" fill="#444" opacity="0.15"/>
<circle cx="41.5" cy="234.9" r="0.6" fill="#444" opacity="0.15"/>
<circle cx="46.3" cy="235.5" r="1.1" fill="#444" opacity="0.15"/>
<circle cx="58.3" cy="237.8" r="6.3" fill="url(#bg1)" opacity="0.26"/>
<circle cx="57.4" cy="238.3" r="0.7" fill="#444" opacity="0.17"/>
<circle cx="59.1" cy="235.0" r="0.8" fill="#444" opacity="0.17"/>
<circle cx="61.4" cy="235.6" r="1.0" fill="#444" opacity="0.17"/>
<circle cx="57.1" cy="236.4" r="0.5" fill="#444" opacity="0.17"/>
<circle cx="54.9" cy="240.9" r="1.1" fill="#444" opacity="0.17"/>
<circle cx="60.4" cy="240.0" r="1.2" fill="#444" opacity="0.17"/>
<circle cx="55.9" cy="238.4" r="0.8" fill="#444" opacity="0.17"/>
<circle cx="72.4" cy="237.8" r="6.3" fill="url(#bg1)" opacity="0.42"/>
<circle cx="72.9" cy="240.9" r="1.0" fill="#444" opacity="0.28"/>
<circle cx="75.7" cy="235.1" r="1.0" fill="#444" opacity="0.28"/>
<circle cx="73.6" cy="239.5" r="0.9" fill="#444" opacity="0.28"/>
<circle cx="74.7" cy="236.4" r="1.1" fill="#444" opacity="0.28"/>
<circle cx="71.7" cy="238.5" r="1.1" fill="#444" opacity="0.28"/>
<circle cx="73.8" cy="236.5" r="0.7" fill="#444" opacity="0.28"/>
<circle cx="71.2" cy="238.7" r="1.2" fill="#444" opacity="0.28"/>
<circle cx="15.5" cy="251.7" r="6.3" fill="url(#bg1)" opacity="0.34"/>
<circle cx="18.3" cy="251.0" r="0.8" fill="#444" opacity="0.22"/>
<circle cx="17.7" cy="250.2" r="0.8" fill="#444" opacity="0.22"/>
<circle cx="12.1" cy="249.5" r="0.9" fill="#444" opacity="0.22"/>
<circle cx="16.9" cy="252.5" r="0.8" fill="#444" opacity="0.22"/>
<circle cx="18.7" cy="252.6" r="0.6" fill="#444" opacity="0.22"/>
<circle cx="12.5" cy="255.0" r="1.2" fill="#444" opacity="0.22"/>
<circle cx="18.4" cy="252.4" r="0.7" fill="#444" opacity="0.22"/>
<circle cx="29.7" cy="251.7" r="6.3" fill="url(#bg1)" opacity="0.30"/>
<circle cx="26.8" cy="250.0" r="0.7" fill="#444" opacity="0.19"/>
<circle cx="32.7" cy="254.4" r="1.0" fill="#444" opacity="0.19"/>
<circle cx="27.2" cy="249.9" r="0.7" fill="#444" opacity="0.19"/>
<circle cx="32.8" cy="249.3" r="1.1" fill="#444" opacity="0.19"/>
<circle cx="31.0" cy="252.0" r="1.2" fill="#444" opacity="0.19"/>
<circle cx="28.0" cy="251.9" r="0.6" fill="#444" opacity="0.19"/>
<circle cx="26.9" cy="248.4" r="0.7" fill="#444" opacity="0.19"/>
<circle cx="44.1" cy="251.7" r="6.3" fill="url(#bg1)" opacity="0.38"/>
<circle cx="41.5" cy="248.6" r="1.2" fill="#444" opacity="0.25"/>
<circle cx="42.6" cy="254.4" r="1.0" fill="#444" opacity="0.25"/>
<circle cx="45.7" cy="252.8" r="1.2" fill="#444" opacity="0.25"/>
<circle cx="46.7" cy="253.2" r="0.9" fill="#444" opacity="0.25"/>
<circle cx="45.5" cy="253.3" r="0.9" fill="#444" opacity="0.25"/>
<circle cx="44.1" cy="249.3" r="1.1" fill="#444" opacity="0.25"/>
<circle cx="44.0" cy="248.7" r="0.6" fill="#444" opacity="0.25"/>
<circle cx="58.3" cy="251.7" r="6.3" fill="url(#bg1)" opacity="0.38"/>
<circle cx="60.9" cy="250.0" r="0.8" fill="#444" opacity="0.25"/>
<circle cx="59.6" cy="254.2" r="0.7" fill="#444" opacity="0.25"/>
<circle cx="57.5" cy="251.2" r="0.5" fill="#444" opacity="0.25"/>
<circle cx="60.9" cy="248.3" r="1.2" fill="#444" opacity="0.25"/>
<circle cx="55.9" cy="249.3" r="1.1" fill="#444" opacity="0.25"/>
<circle cx="60.6" cy="249.8" r="0.9" fill="#444" opacity="0.25"/>
<circle cx="58.1" cy="253.2" r="0.6" fill="#444" opacity="0.25"/>
<circle cx="72.4" cy="251.7" r="6.3" fill="url(#bg1)" opacity="0.26"/>
<circle cx="74.7" cy="255.2" r="1.0" fill="#444" opacity="0.17"/>
<circle cx="75.3" cy="254.8" r="0.8" fill="#444" opacity="0.17"/>
<circle cx="74.8" cy="254.0" r="0.9" fill="#444" opacity="0.17"/>
<circle cx="69.7" cy="252.5" r="1.1" fill="#444" opacity="0.17"/>
<circle cx="71.0" cy="252.7" r="1.1" fill="#444" opacity="0.17"/>
<circle cx="73.1" cy="248.5" r="0.9" fill="#444" opacity="0.17"/>
<circle cx="70.7" cy="254.2" r="1.0" fill="#444" opacity="0.17"/>
</g>
<path d="M66.7 191.3h3.400M68.4 189.6v3.400" stroke="#222" stroke-width=".85"/>
<path d="M10.4 205.8h3.400M12.1 204.1v3.400" stroke="#222" stroke-width=".85"/>
<path d="M24.6 205.8h3.400M26.3 204.1v3.400" stroke="#222" stroke-width=".85"/>
<path d="M39.0 205.8h3.400M40.7 204.1v3.400" stroke="#222" stroke-width=".85"/>
<path d="M53.2 205.8h3.400M54.9 204.1v3.400" stroke="#222" stroke-width=".85"/>
<path d="M67.3 205.8h3.400M69.0 204.1v3.400" stroke="#222" stroke-width=".85"/>
<path d="M10.4 219.7h3.400M12.1 218.0v3.400" stroke="#222" stroke-width=".85"/>
<path d="M24.6 219.7h3.400M26.3 218.0v3.400" stroke="#222" stroke-width=".85"/>
<path d="M39.0 219.7h3.400M40.7 218.0v3.400" stroke="#222" stroke-width=".85"/>
<path d="M53.2 219.7h3.400M54.9 218.0v3.400" stroke="#222" stroke-width=".85"/>
<path d="M67.3 219.7h3.400M69.0 218.0v3.400" stroke="#222" stroke-width=".85"/>
<path d="M10.4 233.8h3.400M12.1 232.1v3.400" stroke="#222" stroke-width=".85"/>
<path d="M24.6 233.8h3.400M26.3 232.1v3.400" stroke="#222" stroke-width=".85"/>
<path d="M39.0 233.8h3.400M40.7 232.1v3.400" stroke="#222" stroke-width=".85"/>
<path d="M53.2 233.8h3.400M54.9 232.1v3.400" stroke="#222" stroke-width=".85"/>
<path d="M67.3 233.8h3.400M69.0 232.1v3.400" stroke="#222" stroke-width=".85"/>
<path d="M10.4 247.7h3.400M12.1 246.0v3.400" stroke="#222" stroke-width=".85"/>
<path d="M24.6 247.7h3.400M26.3 246.0v3.400" stroke="#222" stroke-width=".85"/>
<path d="M39.0 247.7h3.400M40.7 246.0v3.400" stroke="#222" stroke-width=".85"/>
<path d="M53.2 247.7h3.400M54.9 246.0v3.400" stroke="#222" stroke-width=".85"/>
<path d="M67.3 247.7h3.400M69.0 246.0v3.400" stroke="#222" stroke-width=".85"/>
<path d="M10.4 261.6h3.400M12.1 259.9v3.400" stroke="#999" stroke-width=".85"/>
<path d="M24.6 261.6h3.400M26.3 259.9v3.400" stroke="#999" stroke-width=".85"/>
<path d="M39.0 261.6h3.400M40.7 259.9v3.400" stroke="#999" stroke-width=".85"/>
<path d="M53.2 261.6h3.400M54.9 259.9v3.400" stroke="#999" stroke-width=".85"/>
<path d="M67.3 261.6h3.400M69.0 259.9v3.400" stroke="#999" stroke-width=".85"/>
</svg></div>
<div class="sbar" style="left:78.1px;top:16.0px;width:8.300px;height:104px;background:#cdcbc8;border:0.500px solid #a9a7a4;border-radius:2px;"></div>
<div class="sbtn" style="left:78.1px;top:16.0px;width:8.300px;height:7.800px;border-radius:2.500px 2.500px 0 0;"></div>
<svg style="left:80.2px;top:18.8px;width:4px;height:2.500px" viewBox="0 0 8 5"><path d="M.5 4.500L4 .8l3.500 3.700" fill="none" stroke="#b3b1ae" stroke-width="1.400"/></svg>
<div class="sth" style="left:78.1px;top:23.5px;width:8.300px;height:30.700px;"></div>
<div class="a" style="left:80.7px;top:36.5px;width:3.200px;height:.8px;margin-top:1.700px;background:#5a80ba;box-shadow:0 -1.700px 0 #5a80ba,0 1.700px 0 #5a80ba;"></div>
<div class="sbtn" style="left:78.1px;top:111.3px;width:8.300px;height:8.700px;border-radius:0 0 2.500px 2.500px;"></div>
<svg style="left:80.2px;top:114.7px;width:4px;height:2.500px" viewBox="0 0 8 5"><path d="M.5.500L4 4.200 7.500.5" fill="none" stroke="#3a3a38" stroke-width="1.500"/></svg>
<div class="t" style="left:88.7px;top:15.2px;font-size:9px;">Circle (19) flt16&nbsp; (19 X 19)</div>
<div class="t" style="left:88.7px;top:29.2px;font-size:8.400px;">Mode:</div>
<div class="combo" style="left:117.2px;top:27.5px;width:66.700px;height:14.300px;"></div>
<div class="a" style="left:172.5px;top:29.9px;width:.7px;height:9.500px;background:#c9c7c4;"></div>
<svg style="left:175.5px;top:30.4px;width:5px;height:8.400px" viewBox="0 0 10 17"><path d="M1.500 6.500L5 2.500l3.500 4M1.500 10.500l3.500 4 3.500-4" fill="none" stroke="#2c2c2a" stroke-width="1.900"/></svg>
<div class="t" style="left:121.7px;top:29.2px;font-size:8.800px;">Normal</div>
<div class="t" style="left:172.5px;top:43.5px;font-size:9px;">100.0</div>
<div class="t" style="left:88.7px;top:49.2px;font-size:8.500px;">Opacity:</div>
<div class="fill" style="left:124.7px;top:59.1px;width:60px;"></div>
<div class="knob" style="left:181.3px;top:57.4px;width:11.800px;"></div>
<div class="t" style="left:126.4px;top:66.4px;font-size:9px;">20.0</div>
<div class="t" style="left:88.7px;top:72.2px;font-size:8.300px;">Spacing:</div>
<div class="trough" style="left:124.7px;top:81.9px;width:68.300px;"></div>
<div class="fill" style="left:124.7px;top:81.9px;width:6px;"></div>
<div class="knob" style="left:129.1px;top:80.1px;width:11.800px;"></div>
<div class="chk" style="left:89.1px;top:92.1px;"></div>
<div class="t" style="left:100.5px;top:90.2px;font-size:8.300px;">Noise</div>
<div class="btn dis" style="left:91.2px;top:103.8px;width:45.0px;height:15.4px;line-height:14.4px;"><span style="font-size:8.300px">Edit Brush</span></div>
<div class="btn" style="left:144.2px;top:103.8px;width:47.5px;height:15.4px;line-height:14.4px;">New Brush</div>
<div class="btn foc" style="left:91.2px;top:124.6px;width:48.5px;height:15.8px;line-height:14.8px;"><span style="font-size:8.200px">Close</span></div>
<div class="btn" style="left:144.2px;top:124.6px;width:48.8px;height:15.8px;line-height:14.8px;">Refresh</div>
</div>
<!-- ================= COLOR SELECTION ================= -->
<div class="win" style="left:2.200px;top:404.600px;width:249px;height:166.600px;">
<div class="wt" style="height:12.900px"><div class="wico" style="top:2.700px"></div><div class="wtt" style="left:-1px;top:0.700px;font-size:9.200px">Color Selection</div>
<div class="wbtn" style="left:235.2px;top:1.200px;"></div><svg style="left:237.6px;top:3.600px;width:5.200px;height:5.200px" viewBox="0 0 10 10"><path d="M1 1l8 8M9 1l-8 8" stroke="#555553" stroke-width="2.100" stroke-linecap="round"/></svg>
</div>
<div class="a" style="left:4.1px;top:16.4px;width:115.500px;height:120.500px;border:1px solid #c4c2bf;background:#f3f2f1;"></div>
<div class="a" style="left:6.3px;top:20.4px;width:111.500px;height:112px;background:linear-gradient(to right,#000,rgba(0,0,0,0)),linear-gradient(to bottom,#ff0000,#ffffff);"></div>
<div class="a" style="left:6.3px;top:131.8px;width:111.500px;height:.8px;background:rgba(60,60,60,.55);"></div>
<div class="a" style="left:123.2px;top:16.4px;width:10.400px;height:120.500px;border:1px solid #c4c2bf;background:#f3f2f1;"></div>
<div class="a" style="left:124.2px;top:20.4px;width:8.300px;height:112px;background:linear-gradient(to bottom,#ff0000 0%,#ff00ff 16.670%,#0000ff 33.330%,#00ffff 50%,#00ff00 66.670%,#ffff00 83.330%,#ff0000 100%);"></div>
<div class="a" style="left:124.2px;top:132.3px;width:8.300px;height:1.100px;background:#8eeaf0;"></div>
<div class="a" style="left:137.3px;top:16.9px;width:105.800px;height:12.600px;background:#000;"></div>
<div class="a" style="left:189.5px;top:16.9px;width:1px;height:12.600px;background:#e4e3e1;"></div>
<div class="radio" style="left:138.9px;top:36.5px;"></div>
<div class="a" style="left:140.8px;top:38.4px;width:3.600px;height:3.600px;border-radius:50%;background:#222;"></div>
<div class="t" style="left:150.8px;top:34.7px;font-size:8.600px;">H</div>
<div class="trough" style="left:160.8px;top:38.8px;width:37.800px;"></div>
<div class="knob" style="left:160.8px;top:37.0px;width:12px;"></div>
<div class="ent" style="left:202.1px;top:33.0px;width:40.600px;height:14.800px;overflow:hidden;"><div class="t" style="left:2.200px;top:1.800px;font-size:9.300px;">0.00000</div></div>
<div class="radio" style="left:138.9px;top:54.0px;"></div>
<div class="t" style="left:150.8px;top:52.2px;font-size:8.600px;">S</div>
<div class="trough" style="left:160.8px;top:56.3px;width:37.800px;"></div>
<div class="knob" style="left:160.8px;top:54.5px;width:12px;"></div>
<div class="ent" style="left:202.1px;top:50.5px;width:40.600px;height:14.800px;overflow:hidden;"><div class="t" style="left:2.200px;top:1.800px;font-size:9.300px;">0.00000</div></div>
<div class="radio" style="left:138.9px;top:71.5px;"></div>
<div class="t" style="left:150.8px;top:69.7px;font-size:8.600px;">V</div>
<div class="trough" style="left:160.8px;top:73.8px;width:37.800px;"></div>
<div class="knob" style="left:160.8px;top:72.0px;width:12px;"></div>
<div class="ent" style="left:202.1px;top:68.0px;width:40.600px;height:14.800px;overflow:hidden;"><div class="t" style="left:2.200px;top:1.800px;font-size:9.300px;">0.00000</div></div>
<div class="radio" style="left:138.9px;top:89.2px;"></div>
<div class="t" style="left:150.8px;top:87.4px;font-size:8.600px;">R</div>
<div class="trough" style="left:160.8px;top:91.5px;width:37.800px;"></div>
<div class="knob" style="left:160.8px;top:89.7px;width:12px;"></div>
<div class="ent" style="left:202.1px;top:85.7px;width:40.600px;height:14.800px;overflow:hidden;"><div class="t" style="left:2.200px;top:1.800px;font-size:9.300px;">0.000000</div></div>
<div class="radio" style="left:138.9px;top:106.7px;"></div>
<div class="t" style="left:150.8px;top:104.9px;font-size:8.600px;">G</div>
<div class="trough" style="left:160.8px;top:109.0px;width:37.800px;"></div>
<div class="knob" style="left:160.8px;top:107.2px;width:12px;"></div>
<div class="ent" style="left:202.1px;top:103.2px;width:40.600px;height:14.800px;overflow:hidden;"><div class="t" style="left:2.200px;top:1.800px;font-size:9.300px;">0.000000</div></div>
<div class="radio" style="left:138.9px;top:124.4px;"></div>
<div class="t" style="left:150.8px;top:122.6px;font-size:8.600px;">B</div>
<div class="trough" style="left:160.8px;top:126.7px;width:37.800px;"></div>
<div class="knob" style="left:160.8px;top:124.9px;width:12px;"></div>
<div class="ent" style="left:202.1px;top:120.9px;width:40.600px;height:14.800px;overflow:hidden;"><div class="t" style="left:2.200px;top:1.800px;font-size:9.300px;">0.000000</div></div>
<div class="btn foc" style="left:68.1px;top:143.6px;width:84.5px;height:15.7px;line-height:14.7px;"><span style="font-size:8.200px">Close</span></div>
<div class="btn" style="left:157.5px;top:143.6px;width:84.1px;height:15.7px;line-height:14.7px;"><span style="font-size:8.600px">Revert to Old Color</span></div>
</div>
<!-- ================= PHOTO SYMBOL ================= -->
<svg style="left:0;top:0;width:0;height:0" width="0" height="0"><defs>
<filter id="pb" x="-5%" y="-5%" width="110%" height="110%"><feGaussianBlur stdDeviation=".6"/></filter>
<filter id="pb2" x="-5%" y="-5%" width="110%" height="110%"><feGaussianBlur stdDeviation="1.6"/></filter>
<linearGradient id="pbg" x1="0" y1="0" x2="0" y2="1"><stop offset="0" stop-color="#3e3c39"/><stop offset=".55" stop-color="#373533"/><stop offset=".75" stop-color="#2f2c2a"/><stop offset="1" stop-color="#2b2827"/></linearGradient>
<linearGradient id="skin1" x1="0" y1="0" x2="1" y2="1"><stop offset="0" stop-color="#c49178"/><stop offset="1" stop-color="#8c5a46"/></linearGradient>
<linearGradient id="skin2" x1="0" y1="0" x2="0" y2="1"><stop offset="0" stop-color="#ca967f"/><stop offset="1" stop-color="#a8735d"/></linearGradient>
<symbol id="photo" viewBox="0 0 187 102" preserveAspectRatio="none">
<rect width="187" height="102" fill="url(#pbg)"/>
<g filter="url(#pb2)">
<rect x="60" y="0" width="70" height="16" fill="#444140" opacity=".6"/>
<rect x="150" y="60" width="40" height="45" fill="#2a2827"/>
<path d="M55 72c10-4 20-8 28-12l14 8 12-8c8 2 20 5 30 8l-10 34H40z" fill="#202024"/>
</g>
<g filter="url(#pb)">
<path d="M-1 -1h21C13 8 7 18 3 25l-4 9z" fill="#6b5a43"/><path d="M-1 12l7-1-3 14-4 9z" fill="#5a4a38"/><path d="M78.500 0v20M126.500 0v20" stroke="#2c2a29" stroke-width=".9"/>
<rect x="183.500" y="0" width="4" height="102" fill="#2a2928"/>
<!-- camera top-right -->
<path d="M160 1h22v9h-14z" fill="#1a1b1b"/><circle cx="173" cy="6" r="2.300" fill="#4a4f52"/><rect x="147" y="4" width="15" height="4.500" fill="#3c4a36" opacity=".55"/>
<!-- monitor 1 -->
<rect x="9.700" y="17.200" width="52" height="35.500" fill="#a1a2a4"/><rect x="10.500" y="52.500" width="50.500" height="7.200" fill="#87888a"/><path d="M9.700 52.600h52" stroke="#6a6b6d" stroke-width=".6"/>
<rect x="13.200" y="19.800" width="45.600" height="32.100" fill="#15141c"/>
<rect x="15" y="21.500" width="42" height="16.200" fill="#2a2c80"/><rect x="15" y="37.500" width="42" height="10.500" fill="#ec4d5c"/>
<path d="M15 25.900h20.700" stroke="#8d9ad8" stroke-width=".7"/>
<!-- monitor 2 -->
<rect x="70.800" y="19.400" width="50.200" height="35.500" fill="#9fa0a2"/><rect x="71.500" y="54.500" width="49" height="7" fill="#858688"/>
<rect x="73.500" y="21.500" width="45" height="32" fill="#15141c"/>
<rect x="75" y="22.800" width="42" height="16.400" fill="#2a2c80"/><rect x="75" y="39" width="42" height="10" fill="#ec4d5c"/>
<path d="M75 27h20" stroke="#8d9ad8" stroke-width=".7"/>
<!-- monitor 3 -->
<rect x="130" y="19.800" width="50" height="35.500" fill="#9fa0a2"/><rect x="130.800" y="55" width="48.500" height="6.800" fill="#858688"/>
<rect x="132.700" y="22.400" width="44.700" height="31.700" fill="#15141c"/>
<rect x="134.500" y="24" width="41" height="16.200" fill="#2a2c80"/><rect x="134.500" y="40" width="41" height="10" fill="#ec4d5c"/>
<path d="M134.500 28h21" stroke="#8d9ad8" stroke-width=".7"/>
<!-- logos -->
<g font-family="Liberation Sans" font-weight="bold" font-style="italic">
<text x="21.800" y="37.500" font-size="9.600" fill="#ea4a5c" stroke="#ea4a5c" stroke-width=".35" textLength="19.500" lengthAdjust="spacingAndGlyphs">PENN</text>
<text x="30.500" y="42.300" font-size="5.800" fill="#2a2c80" stroke="#2a2c80" stroke-width=".3" textLength="15" lengthAdjust="spacingAndGlyphs">POINT</text>
<text x="140.800" y="40" font-size="9.600" fill="#ea4a5c" stroke="#ea4a5c" stroke-width=".35" textLength="19.500" lengthAdjust="spacingAndGlyphs">PENN</text>
<text x="149" y="44.800" font-size="5.800" fill="#2a2c80" stroke="#2a2c80" stroke-width=".3" textLength="15" lengthAdjust="spacingAndGlyphs">POINT</text>
<text x="80" y="38.900" font-size="9.600" fill="#ea4a5c" stroke="#ea4a5c" stroke-width=".35">PE</text>
</g>
<path d="M43 30c1-2.500 5-3 6.500-.5 1.500 2 1 6-1 8h-6c-.5-2.500-.5-5 .5-7.500z" fill="#ea4a5c"/>
<path d="M162 32.500c1-2.500 5-3 6.500-.5 1.500 2 1 6-1 8h-6c-.5-2.500-.5-5 .5-7.500z" fill="#ea4a5c"/>
<!-- torso -->
<path d="M34.500 102c1-8 3-15 6-21.500 4-4 9-6.500 15.500-8.700 7.500-2.500 14.500-5 21-7l7-5 10 10 12-10c6 3 13 4 20 6 8 3 15 6 20 9.500l3 7c-5 2.500-11 5-16.500 6.700L138.300 102z" fill="#1f1f23"/>
<path d="M106 62c8 3 18 6 26 10l10 7-4 10-3 13H100l4-20z" fill="#26262b"/>
<path d="M34.500 102c1-8 3-15 6-21.500 3-3 6-5 9-6l-6 27.500z" fill="#2d2d33"/>
<path d="M84 60l6 12 8 30M106 60l-5 12" stroke="#34343a" stroke-width="1.300" fill="none"/>
<path d="M83 60l-6 8 10 8zM107 60l8 6-10 9z" fill="#26262b"/>
<!-- hair -->
<path d="M84.500 56c-2.500-8-2.500-18 1-23 3-4 8-5 13-5 6 0 11 2 13 7l1.500 9-2 12-8 6-14 0z" fill="#100e0e"/>
<!-- face -->
<path d="M85.800 47c-.6-8.500 3.500-14 12-14.500 8-.5 13.200 4 13.700 12.500.5 8.500-2 16.500-6 21-3 3.500-10 3.500-13.500 0-3.500-4-5.700-11-6.200-19z" fill="url(#skin2)"/>
<path d="M85.300 43c1-7 6-10.500 13-10.500s11.500 3.500 13 9.500l1-4c-2-6-7-9-14-9S86 32 84.800 38z" fill="#141111"/>
<path d="M88 37c4-3.500 15-4 21-.5l-1 4.500c-6-2-13-2-19 .5z" fill="#cc9a82" opacity=".85"/>
<!-- glasses -->
<path d="M87.300 42.300h10v4.400h-10z" fill="#9aa090" stroke="#2c2222" stroke-width="1"/><path d="M100 42.300h8v4.400h-8z" fill="#b9958a" stroke="#2c2222" stroke-width="1"/><path d="M97.300 43.500h2.700" stroke="#2c2222" stroke-width=".8"/>
<path d="M88 42.300h9" stroke="#a82c3c" stroke-width=".6"/>
<path d="M96 48l-1.500 5h4" stroke="#8a5a46" stroke-width=".7" fill="none"/>
<path d="M93 57c2.500-1 6-1 8.500 0" stroke="#6a4034" stroke-width=".9" fill="none"/>
<!-- goatee -->
<path d="M90.500 60.500c3.500-2 9.500-2 13 0l-1.500 7.500c-2.500 2-7.500 2-10 0z" fill="#1d1412"/>
<!-- neck + necklace -->
<path d="M90.500 68c3 2.500 10 2.500 13 0l2.500 4-8 11-9-12z" fill="#8e5c48"/>
<path d="M92 72l5.500 14M103 71l-5.500 15M96.300 86.500h3M97.800 85v5" stroke="#cfc6b4" stroke-width=".6" fill="none"/>
<!-- raised arm (viewer right) -->
<path d="M113 55c6-5 12-6 16-3.500 13 4 26 9 36 14.500 5 3 5 8 1.500 11.500-2 2-5 2.500-8 2-4-.5-8 1-10 2.700-3-3-8-6-14-9-8-4-15-8-21.500-12z" fill="url(#skin2)"/>
<path d="M116 64c10 5 22 11 32.500 18l3-2.500c-10-7-22-13-33-17.500z" fill="#6e4434" opacity=".7"/>
<path d="M105.500 45c1-4 5-6.500 10-6 5 .5 9 3.500 10.500 8 1 4 0 8-3 10-4 1.500-9 1-12.500-1.500-3-2.500-5.500-6.500-5-10.500z" fill="#bb876f"/>
<path d="M108 44c2 2 3 5 2.500 8M112 41.500c2 2.500 3 6 2.500 9.500M116.500 40.500c1.500 3 2 6 1.500 9" stroke="#8a5a46" stroke-width=".7" fill="none"/>
<!-- left arm (viewer left) -->
<path d="M17.500 84c1-4 3-7 6-8l12 1c2 3 3 7 2.500 11l-3.500 14H16c0-6 .5-12 1.500-18z" fill="#9f6b54"/>
<path d="M30 80l6 1-2 21h-6z" fill="#7d4e3c" opacity=".8"/>
<path d="M17 66c-.5-6 3-11 9-12.500 5-1 10 0 12.500 3.500 2 3.500 1.500 9-.5 14-2 5-6 9-11 9.500-5 0-9-5-10-14.500z" fill="url(#skin1)"/>
<path d="M25 76c3 1 7 0 9-2l1 6c-3 2-7 2-9.500.5z" fill="#2a1f1c"/>
<circle cx="30" cy="73" r="1.300" fill="#e4dccb"/>
<!-- gadget -->
<path d="M33 50l4 1 -1 11-4-1z" fill="#1d1d22"/>
<path d="M27.500 48.500l6.500-1.500 1 7.500-6.500 1.500z" fill="#3557a4"/><path d="M29 49.700l3.600-.8.600 4.300-3.600.8z" fill="#dfe9f8"/>
<ellipse cx="38.300" cy="51.300" rx="3.900" ry="3.700" fill="#c8242e"/><path d="M36 49.500c1-1 3-1.300 4.300-.5" stroke="#ee6a6a" stroke-width=".7" fill="none"/>
</g>
</symbol></defs></svg>

<!-- ================= CANVAS IMAGE ================= -->
<svg style="left:277px;top:259px;width:186.500px;height:101.500px"><use href="#photo" x="0" y="0" width="186.500" height="101.500"/></svg>
<div class="a" style="left:276px;top:257.600px;width:188.400px;height:1.400px;background:repeating-linear-gradient(to right,#e6de22 0,#e6de22 2.350px,#26263a 2.350px,#26263a 4.700px);"></div>
<div class="a" style="left:276px;top:360.300px;width:188.400px;height:1.400px;background:repeating-linear-gradient(to right,#e6de22 0,#e6de22 2.350px,#26263a 2.350px,#26263a 4.700px);"></div>
<div class="a" style="left:276px;top:257.600px;width:1.400px;height:104.100px;background:repeating-linear-gradient(to bottom,#e6de22 0,#e6de22 2.350px,#26263a 2.350px,#26263a 4.700px);"></div>
<div class="a" style="left:463px;top:257.600px;width:1.400px;height:104.100px;background:repeating-linear-gradient(to bottom,#e6de22 0,#e6de22 2.350px,#26263a 2.350px,#26263a 4.700px);"></div>
<!-- ================= LAYERS & CHANNELS ================= -->
<div class="win" style="left:563.500px;top:46px;width:171.500px;height:225.500px;">
<div class="wt" style="height:13.500px"><div class="wico" style="top:2.900px"></div><div class="wtt" style="left:0;top:1.800px">Layers &amp; Channels</div>
<div class="wbtn" style="left:157.0px;top:1.400px;"></div><svg style="left:159.4px;top:3.700px;width:5.200px;height:5.200px" viewBox="0 0 10 10"><path d="M1 1l8 8M9 1l-8 8" stroke="#555553" stroke-width="2.100" stroke-linecap="round"/></svg>
</div>
<div class="t" style="left:4.2px;top:18.9px;font-size:8.350px;">Image:</div>
<div class="combo" style="left:34.7px;top:16.6px;width:130.600px;height:14.900px;"></div>
<div class="a" style="left:153.2px;top:19.0px;width:.7px;height:10px;background:#c9c7c4;"></div>
<svg style="left:156.5px;top:19.9px;width:5px;height:8.400px" viewBox="0 0 10 17"><path d="M1.500 6.500L5 2.500l3.500 4M1.500 10.500l3.500 4 3.500-4" fill="none" stroke="#2c2c2a" stroke-width="1.900"/></svg>
<div class="t" style="left:39.2px;top:18.9px;font-size:8.800px;">shot0001.png-2</div>
<div class="a" style="left:1.5px;top:35.2px;width:166px;height:1px;background:#d5d3d0;"></div>
<div class="a" style="left:1.5px;top:36.2px;width:166px;height:1px;background:#f8f7f6;"></div>
<div class="a" style="left:2.2px;top:55.6px;width:164.800px;height:145.600px;border:1px solid #a9a7a4;border-radius:0 2px 2px 2px;background:#edeceb;"></div>
<div class="a" style="left:35.7px;top:41.0px;width:42.400px;height:14.800px;border:1px solid #a9a7a4;border-bottom:none;border-radius:0 2.500px 0 0;background:linear-gradient(#e4e3e1,#d4d2cf);"></div>
<div class="a" style="left:2.2px;top:38.2px;width:33.600px;height:18.400px;border:1px solid #a9a7a4;border-bottom:none;border-radius:2.500px 2.500px 0 0;background:#edeceb;border-top:1.600px solid #6d97d3;"></div>
<div class="t" style="left:7.2px;top:42.2px;font-size:8.350px;">Layers</div>
<div class="t" style="left:39.7px;top:43.2px;font-size:8.300px;">Channels</div>
<div class="t" style="left:7.2px;top:62.0px;font-size:8.200px;">Mode:</div>
<div class="combo" style="left:34.7px;top:59.3px;width:67px;height:14.900px;"></div>
<div class="a" style="left:90.2px;top:61.7px;width:.7px;height:10px;background:#c9c7c4;"></div>
<svg style="left:93.3px;top:62.6px;width:5px;height:8.400px" viewBox="0 0 10 17"><path d="M1.500 6.500L5 2.500l3.500 4M1.500 10.500l3.500 4 3.500-4" fill="none" stroke="#2c2c2a" stroke-width="1.900"/></svg>
<div class="t" style="left:39.2px;top:61.0px;font-size:8.800px;">Normal</div>
<div class="chk" style="left:106.5px;top:63.2px;"></div>
<div class="t" style="left:118.3px;top:61.7px;font-size:8.050px;">Keep Trans.</div>
<div class="t" style="left:7.2px;top:76.0px;font-size:8.400px;">Opacity:</div>
<div class="fill" style="left:42.2px;top:80.0px;width:86px;"></div>
<div class="knob" style="left:125.7px;top:78.2px;width:12.500px;"></div>
<div class="t" style="left:141.4px;top:76.0px;font-size:9px;">100.0</div>
<div class="a" style="left:5.3px;top:89.3px;width:148.300px;height:77px;background:#fff;border:1px solid #a9a7a4;overflow:hidden;">
<div class="a" style="left:0;top:0;width:147px;height:44.800px;background:#80a4d8;"></div>
<svg style="left:1.900px;top:17.300px;width:14px;height:8.600px" viewBox="0 0 21 14"><path d="M.5 7C4 1.500 8 0 10.500 0S17 1.500 20.500 7C17 12.500 13 14 10.500 14S4 12.500.5 7z" fill="#fff"/><circle cx="10.500" cy="7" r="4.200" fill="#80a4d8"/><circle cx="10.500" cy="7" r="2" fill="#fff"/></svg>
<div class="a" style="left:32.400px;top:0.700px;width:77px;height:43px;background:#f4f4f4;"></div>
<svg style="left:33.200px;top:1.500px;width:75.400px;height:41.400px"><use href="#photo" x="0" y="0" width="75.400" height="41.400"/></svg>
<div class="t" style="left:115.500px;top:16.500px;font-size:9px;color:#fff;">Background</div>
</div>
<div class="sbar" style="left:155.5px;top:89.3px;width:8.700px;height:77px;background:#cdcbc8;border:0.500px solid #a9a7a4;border-radius:2px;"></div>
<div class="sbtn" style="left:155.5px;top:89.3px;width:8.700px;height:8px;border-radius:2.500px 2.500px 0 0;"></div>
<svg style="left:157.8px;top:92.2px;width:4px;height:2.500px" viewBox="0 0 8 5"><path d="M.5 4.500L4 .8l3.500 3.700" fill="none" stroke="#b3b1ae" stroke-width="1.400"/></svg>
<div class="sth" style="left:155.5px;top:97.2px;width:8.700px;height:61.300px;"></div>
<div class="a" style="left:158.3px;top:125.5px;width:3.200px;height:.8px;margin-top:1.700px;background:#5a80ba;box-shadow:0 -1.700px 0 #5a80ba,0 1.700px 0 #5a80ba;"></div>
<div class="sbtn" style="left:155.5px;top:158.3px;width:8.700px;height:8px;border-radius:0 0 2.500px 2.500px;"></div>
<svg style="left:157.8px;top:161.2px;width:4px;height:2.500px" viewBox="0 0 8 5"><path d="M.5.500L4 4.200 7.500.5" fill="none" stroke="#b3b1ae" stroke-width="1.400"/></svg>
<div class="sbar" style="left:5.3px;top:168.8px;width:148.300px;height:8.400px;background:#cdcbc8;border:0.500px solid #a9a7a4;border-radius:2px;"></div>
<div class="sbtn" style="left:5.3px;top:168.8px;width:8.300px;height:8.400px;border-radius:2.500px 0 0 2.500px;"></div>
<svg style="left:8.2px;top:171.0px;width:2.500px;height:4px" viewBox="0 0 5 8"><path d="M4.500.5L.8 4l3.700 3.500" fill="none" stroke="#b3b1ae" stroke-width="1.400"/></svg>
<div class="sthh" style="left:13.6px;top:168.8px;width:117.500px;height:8.400px;"></div>
<div class="a" style="left:69.8px;top:171.5px;width:4.600px;height:3px;background:repeating-linear-gradient(to right,#5f86c0 0 .8px,transparent .8px 1.900px);"></div>
<div class="sbtn" style="left:145.0px;top:168.8px;width:8.600px;height:8.400px;border-radius:0 2.500px 2.500px 0;"></div>
<svg style="left:148.2px;top:171.0px;width:2.500px;height:4px" viewBox="0 0 5 8"><path d="M.5.500L4.200 4 .5 7.500" fill="none" stroke="#3a3a38" stroke-width="1.500"/></svg>
<div class="btn" style="left:6.2px;top:181.0px;width:24.5px;height:15.200px;"></div>
<svg style="left:15.5px;top:184.6px;width:6px;height:8px" viewBox="0 0 12 16"><path d="M1 15V5l4-4h6v14z" fill="#fff" stroke="#222" stroke-width="1.600"/><path d="M1 5h4V1" fill="none" stroke="#222" stroke-width="1.200"/></svg>
<div class="btn dis" style="left:32.8px;top:181.0px;width:24.0px;height:15.200px;"></div>
<svg style="left:41.8px;top:184.6px;width:6px;height:8px" viewBox="0 0 12 16"><path d="M-.5 11.500L6 4.500l6.500 7z" fill="#8e8c89"/></svg>
<div class="btn dis" style="left:58.7px;top:181.0px;width:24.3px;height:15.200px;"></div>
<svg style="left:67.9px;top:184.6px;width:6px;height:8px" viewBox="0 0 12 16"><path d="M-.5 5L6 12l6.500-7z" fill="#8e8c89"/></svg>
<div class="btn" style="left:85.4px;top:181.0px;width:24.8px;height:15.200px;"></div>
<svg style="left:94.0px;top:184.3px;width:7.500px;height:8.500px" viewBox="0 0 15 17"><path d="M5 13V3l3-2.500h6V13z" fill="#fff" stroke="#222" stroke-width="1.500"/><path d="M1 16V6l3-2.500h6V16z" fill="#fff" stroke="#222" stroke-width="1.500"/></svg>
<div class="btn" style="left:112.3px;top:181.0px;width:24.5px;height:15.200px;"></div>
<svg style="left:121.3px;top:185.3px;width:6.500px;height:6.500px" viewBox="0 0 12 12"><path d="M1.500 1.500l9 9M10.500 1.500l-9 9" stroke="#0a0a0a" stroke-width="2.600" stroke-linecap="square"/></svg>
<div class="btn dis" style="left:138.7px;top:181.0px;width:24.8px;height:15.200px;"></div>
<svg style="left:147.6px;top:184.6px;width:7px;height:8px" viewBox="0 0 14 16"><path d="M7 3v11M4 6h6M1.500 10c1 3 3.500 4 5.500 4s4.500-1 5.500-4" fill="none" stroke="#7a7876" stroke-width="1.600"/><circle cx="7" cy="2.500" r="1.500" fill="none" stroke="#7a7876" stroke-width="1.300"/></svg>
<div class="btn" style="left:117.6px;top:204.1px;width:48.0px;height:15.4px;line-height:14.4px;"><span style="font-size:8.200px">Close</span></div>
</div>
<!-- ================= MOUSE CURSOR ================= -->
<svg style="left:387.300px;top:19.400px;width:8.400px;height:12.400px" viewBox="0 0 19 27"><path d="M1.500 1.500v19l4.500-4 3.300 8 3.400-1.500-3.400-7.800h6.200z" fill="#0c0c0c" stroke="#fff" stroke-width="1.700" stroke-linejoin="round"/></svg>
</div></body></html>
